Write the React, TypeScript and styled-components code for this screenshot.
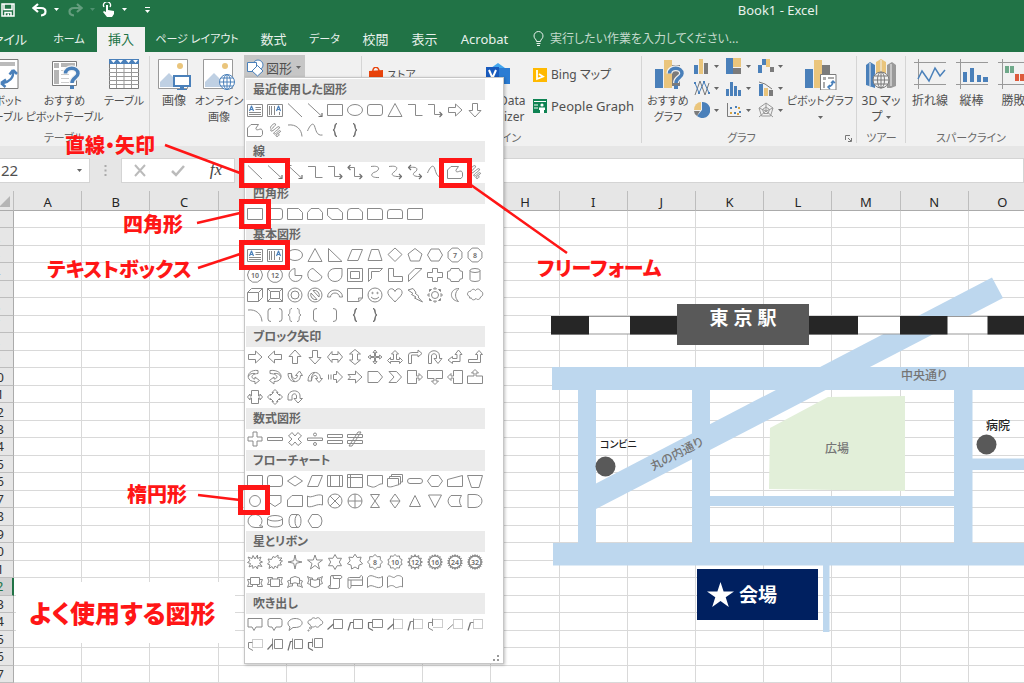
import React from "react";
import styled, { createGlobalStyle, css } from "styled-components";

const GREEN = "#217346";
const RED = "#ff1616";
const BLUE = "#4a80ba";
const SAND = "#eac57c";
const GREY = "#7b7b7b";
const ROAD = "#bdd7ee";

const GlobalStyle = createGlobalStyle`
  *, *::before, *::after { box-sizing: border-box; }
  body {
    margin: 0;
    font-family: "Noto Sans", "Noto Sans CJK JP", sans-serif;
    font-size: 12px;
    line-height: 16px;
    font-feature-settings: "palt";
    color: #505050;
    background: #fff;
  }
  button, input {
    font: inherit;
    font-feature-settings: inherit;
    color: inherit;
    border: 0;
    padding: 0;
    margin: 0;
    background: none;
  }
`;

const Page = styled.div`
  position: relative;
  display: flex;
  flex-direction: column;
  min-height: 100vh;
  overflow: hidden;
`;

/* ---------- title bar and tabs ---------- */

const TitleBar = styled.header`
  display: flex;
  align-items: center;
  justify-content: space-between;
  height: 27px;
  padding: 0 206px 8px 1px;
  background: ${GREEN};
  color: #e8f1ec;
`;

const QuickAccess = styled.div`
  display: flex;
  align-items: center;
  gap: 7px;
  height: 20px;
`;

const QuickButton = styled.button<{ $w: number; $dim?: boolean }>`
  display: flex;
  width: ${(p) => p.$w}px;
  opacity: ${(p) => (p.$dim ? 0.3 : 1)};
`;

const BookTitle = styled.h1`
  margin: 0;
  font-size: 13px;
  font-weight: 400;
  line-height: 20px;
`;

const Tabs = styled.nav`
  display: grid;
  grid-template-columns: 41px 56px 48px 104px 49px 53px 49px 49px 71px 1fr;
  height: 25px;
  background: ${GREEN};
`;

const Tab = styled.button<{ $active?: boolean; $end?: boolean; $long?: boolean }>`
  display: flex;
  align-items: center;
  justify-content: ${(p) => (p.$end ? "flex-end" : "center")};
  padding-right: ${(p) => (p.$end ? 14 : 0)}px;
  padding-bottom: 2px;
  font-size: ${(p) => (p.$long ? 11 : 13)}px;
  white-space: nowrap;
  color: ${(p) => (p.$active ? GREEN : "#e8f1ec")};
  background: ${(p) => (p.$active ? "#f1f1f1" : "transparent")};
`;

const TellMe = styled.label`
  display: flex;
  align-items: center;
  gap: 6px;
  padding: 0 0 2px 13px;
  color: #c4dacd;
`;

const TellMeInput = styled.input`
  width: 220px;
  font-size: 12px;
  &::placeholder { color: #c4dacd; opacity: 1; }
`;

/* ---------- ribbon ---------- */

const Ribbon = styled.section`
  display: flex;
  height: 94px;
  background: #f1f1f1;
  overflow: hidden;
`;

const GroupBox = styled.div<{ $w: number }>`
  position: relative;
  display: flex;
  flex: none;
  flex-direction: column;
  width: ${(p) => p.$w}px;
  &:not(:last-child)::after {
    content: "";
    position: absolute;
    right: 0;
    top: 4px;
    bottom: 3px;
    width: 1px;
    background: #d5d5d5;
  }
`;

const Tools = styled.div<{ $pad?: number; $cut?: number }>`
  display: flex;
  height: 78px;
  padding-left: ${(p) => p.$pad ?? 0}px;
  margin-left: ${(p) => -(p.$cut ?? 0)}px;
`;

const GroupLabel = styled.div<{ $shift?: number }>`
  padding-right: ${(p) => p.$shift ?? 0}px;
  text-align: center;
  font-size: 11px;
  color: #6a6a6a;
`;

const BigButton = styled.button<{ $w: number }>`
  display: flex;
  flex: none;
  flex-direction: column;
  align-items: center;
  width: ${(p) => p.$w}px;
  padding-top: 6px;
  white-space: nowrap;
  svg { display: block; flex: none; }
`;

const BigText = styled.span<{ $small?: boolean }>`
  display: flex;
  flex-direction: column;
  align-items: center;
  margin-top: 3px;
  font-size: ${(p) => (p.$small ? 11 : 12)}px;
`;

const CaretLine = styled.span`
  display: flex;
  align-items: center;
  gap: 3px;
  height: 16px;
`;

const ShapesButton = styled.button`
  display: flex;
  align-items: center;
  gap: 2px;
  height: 25px;
  width: 61px;
  margin: 3px 0 0 2px;
  padding-left: 2px;
  background: #c6c6c6;
`;

const ShapesWord = styled.span`
  margin-right: 2px;
  font-size: 13px;
`;

const LinkColumn = styled.div`
  display: flex;
  flex-direction: column;
  gap: 15px;
  padding: 15px 0 0 2px;
`;

const SmallButton = styled.button<{ $size?: number }>`
  display: flex;
  align-items: center;
  gap: 4px;
  height: 16px;
  font-size: ${(p) => p.$size ?? 13}px;
  white-space: nowrap;
`;

const StoreSlot = styled.div`
  width: 95px;
  padding-top: 15px;
`;

const ChartGrid = styled.div`
  display: grid;
  grid-template-columns: repeat(3, 32px);
  grid-auto-rows: 22px;
  padding: 3px 0 0 3px;
`;

const ChartButton = styled.button`
  display: flex;
  align-items: center;
  gap: 4px;
`;

const Launcher = styled.button`
  position: absolute;
  right: 5px;
  bottom: 4px;
  display: flex;
`;

/* ---------- formula bar ---------- */

const FormulaBar = styled.div`
  display: flex;
  align-items: center;
  height: 45px;
  padding-top: 3px;
  background: #e6e6e6;
`;

const NameBox = styled.div`
  display: flex;
  align-items: center;
  width: 90px;
  height: 25px;
  padding: 0 7px 0 1px;
  background: #fff;
  border: 1px solid #d4d4d4;
  border-left: 0;
`;

const NameInput = styled.input`
  flex: 1;
  min-width: 0;
  font-size: 15px;
`;

const Grip = styled.div`
  width: 31px;
  display: flex;
  justify-content: center;
`;

const FormulaTools = styled.div`
  display: flex;
  align-items: center;
  justify-content: space-between;
  width: 114px;
  height: 25px;
  padding: 0 12px 0 11px;
  margin-right: 5px;
  background: #fff;
  border: 1px solid #d4d4d4;
  button { display: flex; }
`;

const FxButton = styled.button`
  font-family: "Liberation Serif", serif;
  font-size: 17px;
  font-style: italic;
  color: #444;
`;

const FormulaInput = styled.input`
  flex: 1;
  height: 25px;
  background: #fff;
  border: 1px solid #d4d4d4;
`;

/* ---------- worksheet ---------- */

const SheetArea = styled.main`
  position: relative;
  flex: 1;
  display: flex;
  margin: 0 -13px 0 -20px;
`;

const Sheet = styled.table`
  display: grid;
  flex: 1;
  grid-template-columns: 34px repeat(15, 1fr);
  grid-template-rows: 20px repeat(27, minmax(15px, 1fr));
  thead, tbody, tr { display: contents; }
`;

const ColHead = styled.th`
  padding: 0;
  background: #e6e6e6;
  border-right: 1px solid #bdbdbd;
  border-bottom: 1px solid #ababab;
  font-size: 13px;
  font-weight: 400;
  line-height: 22px;
  color: #262626;
`;

const Corner = styled(ColHead)`
  display: flex;
  justify-content: flex-end;
  align-items: flex-end;
  padding: 0 3px 3px 0;
`;

const RowHead = styled.th<{ $active?: boolean }>`
  display: flex;
  align-items: center;
  justify-content: center;
  padding: 0;
  background: #e6e6e6;
  border-right: 1px solid #ababab;
  border-bottom: 1px solid #bdbdbd;
  font-size: 13px;
  font-weight: 400;
  line-height: 14px;
  color: #333;
  ${(p) =>
    p.$active &&
    css`
      background: #d2d2d2;
      border-right: 2px solid ${GREEN};
      color: ${GREEN};
    `}
`;

const Cell = styled.td`
  padding: 0;
  border-right: 1px solid #d9d9d9;
  border-bottom: 1px solid #d9d9d9;
`;

/* ---------- map drawn on the sheet ---------- */

const MapCanvas = styled.div`
  position: absolute;
  left: 551px;
  top: 277px;
  width: 473px;
  height: 356px;
  svg { display: block; }
`;

const MapBox = styled.div<{ $x: number; $y: number; $w: number; $h: number; $c: string }>`
  position: absolute;
  left: ${(p) => p.$x}px;
  top: ${(p) => p.$y}px;
  display: flex;
  align-items: center;
  justify-content: center;
  gap: 5px;
  width: ${(p) => p.$w}px;
  height: ${(p) => p.$h}px;
  background: ${(p) => p.$c};
  color: #fff;
  font-size: 19px;
  font-weight: 700;
  line-height: 24px;
`;

const Station = styled(MapBox)`
  align-items: flex-start;
  padding-top: 2px;
`;

const Venue = styled(MapBox)`
  justify-content: flex-start;
  padding-left: 10px;
`;

const Place = styled.span<{ $x: number; $y: number; $c?: string; $turn?: number; $size?: number }>`
  position: absolute;
  left: ${(p) => p.$x}px;
  top: ${(p) => p.$y}px;
  font-size: ${(p) => p.$size ?? 12}px;
  font-weight: 500;
  white-space: nowrap;
  color: ${(p) => p.$c ?? "#757575"};
  transform: rotate(${(p) => p.$turn ?? 0}deg);
`;

/* ---------- shapes menu ---------- */

const Menu = styled.div`
  position: absolute;
  left: 244px;
  top: 77px;
  width: 260px;
  height: 587px;
  padding: 1px;
  background: #fff;
  border: 1px solid #c6c6c6;
  box-shadow: 1px 1px 3px rgba(0, 0, 0, 0.25);
`;

const MenuList = styled.div`
  display: flex;
  flex-direction: column;
  justify-content: space-between;
  width: 239px;
  height: 575px;
`;

const MenuTitle = styled.h2`
  margin: 0;
  height: 21px;
  padding-left: 7px;
  background: #ebebeb;
  font-size: 12px;
  font-weight: 700;
  line-height: 21px;
  color: #666;
`;

const ShapeGrid = styled.div`
  display: grid;
  grid-template-columns: repeat(12, 20px);
  grid-auto-rows: 20px;
  margin-left: -1px;
`;

const ShapeButton = styled.button`
  display: block;
  width: 20px;
  height: 20px;
  svg { display: block; }
`;

const ResizeGrip = styled.div`
  position: absolute;
  right: 3px;
  bottom: 1px;
  display: flex;
`;

/* ---------- red notes ---------- */

const Note = styled.strong<{ $x: number; $y: number }>`
  position: absolute;
  left: ${(p) => p.$x}px;
  top: ${(p) => p.$y}px;
  font-size: 20px;
  font-weight: 900;
  line-height: 24px;
  white-space: nowrap;
  color: ${RED};
`;

const Frame = styled.div<{ $x: number; $y: number; $w: number }>`
  position: absolute;
  left: ${(p) => p.$x}px;
  top: ${(p) => p.$y}px;
  width: ${(p) => p.$w}px;
  height: 30px;
  border: 5px solid ${RED};
`;

const Pointers = styled.svg`
  position: absolute;
  left: 0;
  top: 0;
  pointer-events: none;
`;

const Caption = styled.div`
  position: absolute;
  left: 16px;
  top: 582px;
  width: 219px;
  height: 61px;
  padding-left: 13px;
  background: #fff;
  color: ${RED};
  font-size: 25px;
  font-weight: 900;
  line-height: 62px;
  white-space: nowrap;
`;

/* ---------- shape glyphs, drawn in a 20 x 20 box ---------- */

const ell = (cx: number, cy: number, rx: number, ry = rx) =>
  `M${cx - rx} ${cy}a${rx} ${ry} 0 1 0 ${2 * rx} 0a${rx} ${ry} 0 1 0 ${-2 * rx} 0Z`;

const ring = (n: number, radii: number[], turn = -90) => {
  const pts = Array.from({ length: n }, (_, i) => {
    const a = ((turn + (360 * i) / n) * Math.PI) / 180;
    const r = radii[i % radii.length];
    return `${(10 + r * Math.cos(a)).toFixed(2)} ${(10 + r * Math.sin(a)).toFixed(2)}`;
  });
  return `M${pts.join("L")}Z`;
};

const star = (n: number, outer: number, inner: number) => ring(2 * n, [outer, inner]);

const SCRIBBLE = "M5.500 8.500C5 6 9.500 2.500 10.500 4C11.500 6 4 9.500 6 11C8 12 13 5 14.500 7C15.500 9 7 12.500 9 14C10.500 15 14.500 9 15.500 11C16 13 10 14 11 16C12 17 14.500 16 14 14";
const FREEFORM = "M2.500 16.500V8L6 4.500H13.500L11 8C10.500 10.500 13 10 15 9C17 9 17.500 10 17.500 12V14.500L16 16.500Z";

type Glyph = { d: string; dash?: string; heavy?: string; text?: string; blue?: string };

const G: Record<string, Glyph> = {
  textH: { d: "M2.500 4.500H17.500V16.500H2.500ZM10.500 7.500H16M10.500 9.500H16M4 12.500H16M4 14.500H16", blue: "M4.500 11L6.500 6L8.500 11M5 9.500H8" },
  textV: { d: "M2.500 4.500H17.500V16.500H2.500ZM4.500 6V15M6.500 6V15M9.500 6V15M14.500 12V15", blue: "M11.500 11L13.500 6L15.500 11M12 9.500H15" },
  line: { d: "M3 3.500L17 17" },
  arrow: { d: "M3 3.500L17 16.500", heavy: "M17 13V16.500H13.500" },
  arrow2: { d: "M3 3.500L17 16.500M3 7V3.500H6.500", heavy: "M17 13V16.500H13.500" },
  rect: { d: "M2.500 4.500H17.500V15.500H2.500Z" },
  ellipse: { d: ell(10, 10, 7.5, 5.5) },
  roundRect: { d: "M5 4.500H15A2.500 2.500 0 0 1 17.500 7V13A2.500 2.500 0 0 1 15 15.500H5A2.500 2.500 0 0 1 2.500 13V7A2.500 2.500 0 0 1 5 4.500Z" },
  triangle: { d: "M10 3.500L17 16.500H3Z" },
  elbow: { d: "M3 4.500H10.500V15.500H17.500" },
  elbowArrow: { d: "M3 4.500H9.500V14.500H17", heavy: "M14.500 12L17 14.500L14.500 17" },
  elbowDouble: { d: "M3 5.500H9.500V14.500H17", heavy: "M14.500 12L17 14.500L14.500 17M5.500 3L3 5.500L5.500 8" },
  curveConn: { d: "M6 4.500C17 3 14 9 10 10S4 16 14 15.500" },
  curveArrow: { d: "M4 4.500C15 3 12 8 9 10S6 15 16 14.500", heavy: "M14 12L16.500 14.500L14 17" },
  curveDouble: { d: "M4 5.500C15 4 12 9 10 10S6 15 16 14.500", heavy: "M14 12L16.500 14.500L14 17M6 3L3.500 5.500L6 8" },
  curve: { d: "M2.500 11C5 5 8 2 9.500 6S11.500 16 17.500 15" },
  freeform: { d: FREEFORM },
  scribble: { d: SCRIBBLE },
  arc: { d: "M3 5C11 4 16.500 9 17 16.500" },
  braceL: { d: "M12 3.500C8.500 3.500 11 9 8 10C11 11 8.500 16.500 12 16.500", heavy: "M12 3.500C9 3.500 11 9 8.500 10C11 11 9 16.500 12 16.500" },
  braceR: { d: "M8 3.500C11.500 3.500 9 9 12 10C9 11 11.500 16.500 8 16.500", heavy: "M8 3.500C11 3.500 9 9 11.500 10C9 11 11 16.500 8 16.500" },

  snip1: { d: "M2.500 4.500H13.500L17.500 8.500V15.500H2.500Z" },
  snip2: { d: "M6 4.500H14L17.500 8.500V15.500H2.500V8.500Z" },
  snipDiag: { d: "M2.500 4.500H13L17.500 8.500V15.500H7L2.500 11.500Z" },
  snipRound: { d: "M6 4.500H14L17.500 8V15.500H2.500V8Q2.500 4.500 6 4.500Z" },
  round1: { d: "M2.500 4.500H15Q17.500 4.500 17.500 7V15.500H2.500Z" },
  round2: { d: "M5 5.500H15Q17.500 5.500 17.500 8V14.500H2.500V8Q2.500 5.500 5 5.500Z" },
  roundDiag: { d: "M4 4.500H17.500V14Q17.500 15.500 16 15.500H2.500V6Q2.500 4.500 4 4.500Z" },

  rtTriangle: { d: "M3.500 3.500L17 16.500H3.500Z" },
  parallelogram: { d: "M7 4.500H17.500L13 15.500H2.500Z" },
  trapezoid: { d: "M6.500 4.500H13.500L17 15.500H3Z" },
  diamond: { d: "M10 3L17 9.500L10 16.500L3 9.500Z" },
  pentagon: { d: "M10 3.500L17 9L14.500 16H5.500L3 9Z" },
  hexagon: { d: "M6 4L14 4L17.500 10L14 16H6L2.500 10Z" },
  heptagon: { d: ring(8, [7.5], -67.5), text: "7" },
  octagon: { d: ring(8, [7.5], -67.5), text: "8" },
  decagon: { d: ring(10, [7.5], 0), text: "10" },
  dodecagon: { d: ring(12, [7.5], -75), text: "12" },
  pie: { d: "M10 3.500A6.500 6.500 0 1 0 17 10.500H10Z" },
  chord: { d: "M8 3.500L17 11.500C16 17 7 18 4 13.500C1 9 4 4 8 3.500Z" },
  teardrop: { d: "M17 3.500V10A7 6.500 0 1 1 10 3.500Z" },
  frame: { d: "M2.500 3.500H17.500V16.500H2.500ZM5.500 6.500H14.500V13.500H5.500Z" },
  halfFrame: { d: "M3.500 3.500H17.500L14.500 6.500H6.500V13.500L3.500 16.500Z" },
  ell: { d: "M3.500 3.500H8.500V11.500H17.500V16.500H3.500Z" },
  stripe: { d: "M10 3.500H17L3.500 16.500V10Z" },
  cross: { d: "M7.500 3.500H12.500V7.500H17.500V12.500H12.500V16.500H7.500V12.500H2.500V7.500H7.500Z" },
  plaque: { d: "M6 3.500H14Q14 6.500 17.500 6.500V13.500Q14 13.500 14 16.500H6Q6 13.500 2.500 13.500V6.500Q6 6.500 6 3.500Z" },
  can: { d: "M5 5.500A5 2 0 0 1 15 5.500V14.500A5 2 0 0 1 5 14.500ZM5 5.500A5 2 0 0 0 15 5.500" },
  cube: { d: "M2.500 7.500L6.500 3.500H17.500V12.500L13.500 16.500H2.500ZM2.500 7.500H13.500V16.500M13.500 7.500L17.500 3.500" },
  bevel: { d: "M2.500 3.500H17.500V16.500H2.500ZM5.500 6.500H14.500V13.500H5.500ZM2.500 3.500L5.500 6.500M17.500 3.500L14.500 6.500M2.500 16.500L5.500 13.500M17.500 16.500L14.500 13.500" },
  donut: { d: ell(10, 10, 7) + ell(10, 10, 4) },
  no: { d: ell(10, 10, 7) + "M6 8L12 14.500A5 5 0 0 1 6 8ZM8 5.500A5 5 0 0 1 14 12Z" },
  blockArc: { d: "M2.500 12A7.500 7 0 0 1 17.500 12H14.500A4.500 4 0 0 0 5.500 12Z" },
  folded: { d: "M2.500 3.500H17.500V13L14 16.500H2.500ZM17.500 13L13.500 13L14 16.500" },
  smiley: { d: ell(10, 10, 7) + ell(7.5, 8, 0.7) + ell(12.5, 8, 0.7) + "M6 12Q10 16 14 12" },
  heart: { d: "M10 6.500C12 1.500 18 4 17 8.500C16 12 12 14 10 17C8 14 4 12 3 8.500C2 4 8 1.500 10 6.500Z" },
  bolt: { d: "M3 5L8 3.500L11 7.500L10 8L14 11.500L13 12L17.500 17L9.500 13L11 12L6.500 9.500L8 8.500Z" },
  sun: { d: ell(10, 10, 3.5) + "M8.500 4L10 2.500L11.500 4ZM8.500 16L10 17.500L11.500 16ZM4 8.500L2.500 10L4 11.500ZM16 8.500L17.500 10L16 11.500ZM4.500 4.500H6.500L4.500 6.500ZM15.500 4.500V6.500L13.500 4.500ZM4.500 15.500V13.500L6.500 15.500ZM15.500 15.500H13.500L15.500 13.500Z" },
  moon: { d: "M14 3.500C4.500 3.500 3.500 15 13.500 16.500C9.500 13 9.500 7 14 3.500Z" },
  cloud: { d: "M4.500 11.500C1 10 2.500 6 5.500 6.500C7 3.500 9.500 4 10.500 5.500C12 3 15 4 15.500 6C19 7 18 11.500 15.500 12C15 15 12 15 11 13.500C8.500 16 6.500 14.500 6.500 13Q4 14 4.500 11.500Z" },
  bracketPair: { d: "M6 3.500Q3 3.500 3 6V14Q3 16.500 6 16.500M14 3.500Q17 3.500 17 6V14Q17 16.500 14 16.500" },
  bracePair: { d: "M7 3.500C3 3.500 6.500 9 3 10C6.500 11 3 16.500 7 16.500M12 3.500C16 3.500 12.500 9 16 10C12.500 11 16 16.500 12 16.500" },
  bracketL: { d: "M12 3.500Q8.500 3.500 8.500 6V14Q8.500 16.500 12 16.500" },
  bracketR: { d: "M8 3.500Q11.500 3.500 11.500 6V14Q11.500 16.500 8 16.500" },

  right: { d: "M3.500 7.500H10.500V4L17 10L10.500 16V12.500H3.500Z" },
  left: { d: "M16.500 7.500H9.500V4L3 10L9.500 16V12.500H16.500Z" },
  up: { d: "M7.500 16.500V9.500H4L10 3L16 9.500H12.500V16.500Z" },
  down: { d: "M7.500 3.500V10.500H4L10 17L16 10.500H12.500V3.500Z" },
  leftRight: { d: "M2.500 10L7 4.500V7.500H13V4.500L17.500 10L13 15.500V12.500H7V15.500Z" },
  upDown: { d: "M10 2.500L15.500 7H12.500V13H15.500L10 17.500L4.500 13H7.500V7H4.500Z" },
  quad: { d: "M10 3L12 5.500H10.500V9.500H14.500V8L17 10L14.500 12V10.500H10.500V14.500H12L10 17L8 14.500H9.500V10.500H5.500V12L3 10L5.500 8V9.500H9.500V5.500H8Z" },
  tri: { d: "M10 3.500L13.500 7H11.500V12.500H14.500V10.500L17.500 13.500L14.500 16.500V14.500H5.500V16.500L2.500 13.500L5.500 10.500V12.500H8.500V7H6.500Z" },
  bent: { d: "M3.500 16.500V8Q3.500 5.500 7 5.500H13V3L17 6.500L13 10V8H6.500V16.500Z" },
  uturn: { d: "M3.500 16.500V9C3.500 2 14.500 2 14.500 9V11.500H17L13 16.500L9 11.500H11.500V9C11.500 6 6.500 6 6.500 9V16.500Z" },
  leftUp: { d: "M13.500 3L17 7.500H15V14.500H7.500V16.500L3 13L7.500 9.500V11.500H12V7.500H10Z" },
  bentUp: { d: "M14 3.500L17.500 7.500H15.500V15.500H3.500V12.500H12.500V7.500H10.500Z" },
  cRight: { d: "M13 3.500C1 2 0 15 10 14.500V17L14.500 13.500L10 10V12C6 12 5 7 13 6.500ZM3.500 9.500C4 7 7 6 10 6.500" },
  cLeft: { d: "M5 3.500C19 2 19 15 9 14.500V17L4.500 13.500L9 10V12C13 12 14 7 5 6.500ZM15.500 9.500C15 7 12 6 9 6.500" },
  cUp: { d: "M3 6.500C3 17 15.500 17 15.500 8.500H17.500L14.500 4L10.500 8.500H12.500C12 13 7 13 6.500 6.500ZM10 14.500C7 13 6 10 6.500 6.500" },
  cDown: { d: "M3 14C3 3 15.500 3 15.500 11.500H17.500L14 15.500L10.500 11.500H12.500C12 7 7 7 6.500 14ZM10 5.500C7 7 6 10 6.500 14" },
  striped: { d: "M8.500 7.500H11.500V4L17.500 10L11.500 16V12.500H8.500ZM3.500 7.500V12.500M6 7.500V12.500" },
  notched: { d: "M3 7.500H10.500V4L17 10L10.500 16V12.500H3L5.500 10Z" },
  home: { d: "M3 4.500H13L17.500 10L13 15.500H3Z" },
  chevron: { d: "M4 4.500H11.500L16.500 10L11.500 15.500H4L9 10Z" },
  callR: { d: "M2.500 3.500H11.500V9H14V6.500L17.500 10L14 13.500V11H11.500V16.500H2.500Z" },
  callD: { d: "M2.500 3.500H17.500V11.500H11V14H13.500L10 17.500L6.500 14H9V11.500H2.500Z" },
  callL: { d: "M17.500 3.500H8.500V9H6V6.500L2.500 10L6 13.500V11H8.500V16.500H17.500Z" },
  callU: { d: "M2.500 16.500H17.500V9H11V6H13.500L10 2.500L6.500 6H9V9H2.500Z" },
  callLR: { d: "M6.500 3.500H13.500V9H15V7L17.500 10L15 13V11H13.500V16.500H6.500V11H5V13L2.500 10L5 7V9H6.500Z" },
  callQ: { d: "M10 2.500L13 5.500H11.500L14.500 8.500V7L17.500 10L14.500 13V11.500L11.500 14.500H13L10 17.500L7 14.500H8.500L5.500 11.500V13L2.500 10L5.500 7V8.500L8.500 5.500H7Z" },
  circular: { d: "M3 13V10C3 2 15 2 15 9V11.500H17.500L13 16L9 11.500H11.500V9C11.500 6 7 6 7 9.500V13Z" },

  plus: { d: "M8 3H12V8H17V12H12V17H8V12H3V8H8Z" },
  minus: { d: "M2.500 8.500H17.500V11.500H2.500Z" },
  mult: { d: "M7 3.500L10 7L13 3.500L16.500 7L13 10L16.500 13.500L13 16.500L10 13L7 16.500L3.500 13.500L7 10L3.500 7Z" },
  div: { d: "M2.500 9H17.500V11.500H2.500Z" + ell(10, 5.5, 1.5) + ell(10, 15, 1.5) },
  eq: { d: "M2.500 5.500H17.500V8.500H2.500ZM2.500 11.500H17.500V14.500H2.500Z" },
  neq: { d: "M2.500 5.500H17.500V8.500H2.500ZM2.500 11.500H17.500V14.500H2.500ZM13 3H16L7 17H4Z" },

  decision: { d: "M10 5L17.500 10L10 15L2.500 10Z" },
  predefined: { d: "M2.500 4.500H17.500V15.500H2.500ZM5.500 4.500V15.500M14.500 4.500V15.500" },
  internal: { d: "M2.500 3.500H17.500V16.500H2.500ZM5.500 3.500V16.500M2.500 6.500H17.500" },
  document: { d: "M2.500 4.500H17.500V13C14 12 11 17 7 16L2.500 14.500Z" },
  multidoc: { d: "M2.500 7.500H13.500V14C10 14 7 17 2.500 15.500ZM4.500 7V5.500H15.500V13H14M6.500 5V3.500H17.500V11H16" },
  terminator: { d: "M5 7.500H15A2.500 2.500 0 0 1 15 12.500H5A2.500 2.500 0 0 1 5 7.500Z" },
  preparation: { d: "M6.500 4.500H13.500L17.500 10L13.500 15.500H6.500L2.500 10Z" },
  manualIn: { d: "M2.500 8.500L17.500 4.500V15.500H2.500Z" },
  manualOp: { d: "M2.500 4.500H17.500L14 16.500H6.500Z" },
  connector: { d: ell(10, 10, 5.5) },
  offpage: { d: "M4 4.500H16V11.500L10 15.500L4 11.500Z" },
  card: { d: "M7 4.500H17.500V15.500H2.500V9Z" },
  tape: { d: "M2.500 5C6 8 12 2 17.500 4.500V14C12 12 8 17 2.500 15.500Z" },
  sum: { d: ell(10, 10, 7) + "M5 5L15 15M15 5L5 15" },
  or: { d: ell(10, 10, 7) + "M10 3V17M3 10H17" },
  collate: { d: "M5.500 3.500H14.500L5.500 16.500H14.500Z" },
  sort: { d: "M10 3L15 10L10 17L5 10ZM5 10H15" },
  extract: { d: "M10 4.500L15.500 15.500H4.500Z" },
  merge: { d: "M3.500 4L16.500 4L10 16.500Z" },
  stored: { d: "M6 4.500H16.500Q12.500 10 16.500 15.500H6Q0 10 6 4.500Z" },
  delay: { d: "M3 3.500H10A7 6.500 0 0 1 10 16.500H3Z" },
  seq: { d: "M17.500 16.500H10A7 6.500 0 1 1 14.500 15H17.500Z" },
  disk: { d: "M2.500 7.500A7.500 3 0 0 1 17.500 7.500V13A7.500 3 0 0 1 2.500 13ZM2.500 7.500A7.500 2.500 0 0 0 17.500 7.500" },
  direct: { d: "M7 3.500H13A3 6.500 0 0 1 13 16.500H7A3 6.500 0 0 1 7 3.500ZM13 3.500A3 6.500 0 0 0 13 16.500" },
  display: { d: "M3 10L7 3.500H13Q17 5 17 10T13 16.500H7Z" },

  boom1: { d: "M10 7L12.500 3L12.500 6.500L16 5L14.500 8.500L17.500 10L14.500 11L17 14.500L13 13.500L12.500 17L10.500 14L8 16.500L7.500 13.500L4 15L5.500 11.500L2.500 10.500L5 8.500L3 5L7 6.500L8 3.500Z" },
  boom2: { d: "M10 5.500L13 3L13 6L17 6L14.500 8.500L17.500 9L15 11L16.500 13L13 13L12.500 16L10 14L8.500 17L7 14.500L4 16.500L5 13L2.500 12L4.500 10L3 7L6.500 7.500L8 4.500Z" },
  star4: { d: star(4, 7, 1.8) },
  star5: { d: "M10 3L11.700 8H17.500L13 11.500L14.500 17L10 13.500L5.500 17L7 11.500L2.500 8H8.300Z" },
  star6: { d: star(6, 7.5, 4.3) },
  star7: { d: star(7, 7.8, 5) },
  star8: { d: star(8, 7.5, 5.8), text: "8" },
  star10: { d: star(10, 7.5, 6), text: "10" },
  star12: { d: star(12, 7.5, 5.2) + ell(10, 10, 5.8), text: "12" },
  star16: { d: star(16, 7.5, 5.4) + ell(10, 10, 6), text: "16" },
  star24: { d: star(18, 7.5, 5.4) + ell(10, 10, 6), text: "24" },
  star32: { d: star(20, 7.5, 5.4) + ell(10, 10, 6), text: "32" },
  ribbonUp: { d: "M5.500 12.500V5.500H14.500V12.500ZM5.500 7.500H2.500L4 11L2.500 14.500H7.500V12.500M14.500 7.500H17.500L16 11L17.500 14.500H12.500V12.500" },
  ribbonDown: { d: "M5.500 7V14.500H14.500V7ZM5.500 12.500H2.500L4 9L2.500 5.500H7.500V7M14.500 12.500H17.500L16 9L17.500 5.500H12.500V7" },
  cRibbonUp: { d: "M5.500 12V6Q10 3 14.500 6V12Q10 9.500 5.500 12ZM5.500 8L2.500 9L4 12L2.500 15.500Q5 13.500 7.500 14V11.500M14.500 8L17.500 9L16 12L17.500 15.500Q15 13.500 12.500 14V11.500" },
  cRibbonDown: { d: "M5.500 7V14Q10 17 14.500 14V7Q10 9.500 5.500 7ZM5.500 12.500L2.500 11.500L4 8L2.500 4.500Q5 6.500 7.500 6V8M14.500 12.500L17.500 11.500L16 8L17.500 4.500Q15 6.500 12.500 6V8" },
  vScroll: { d: "M6.500 3.500H16Q18 5 16 6.500H14.500V15Q14.500 16.500 12.500 16.500H4Q2 15 4 13.500H5.500V5Q5.500 3.500 7 3.500Q9 4 8.500 6.500H14.500M4 13.500Q6.500 14 4.500 16.500" },
  hScroll: { d: "M3 6.500Q3 5.500 4.500 5.500H15V4.500Q16.500 2.500 17.500 4.500V13.500H6V15.500Q4.500 17.500 3 15.500ZM6 13.500V8H3M6 8H17.500" },
  wave: { d: "M2.500 5.500C7 0 12 9 17.500 4.500V14C12 19 7 10 2.500 15.500Z" },
  dWave: { d: "M2.500 5C5 2 8 7 10 5S15 3 17.500 5.500V15C15 13 12 17 10 15S5 13 2.500 15.500Z" },

  rectCall: { d: "M3 4.500H17V13H11L9 16.500L7 13H3Z" },
  roundCall: { d: "M5 4.500H15Q17 4.500 17 6.500V11Q17 13 15 13H11L9 16.500L7 13H5Q3 13 3 11V6.500Q3 4.500 5 4.500Z" },
  ellCall: { d: "M5 13C0 9 5 4.500 10 4.500C19.500 4.500 19.500 13.500 10 13.500H8L4 16.500Z" },
  cloudCall: { d: "M5 10.500C1.500 10 3 5 6 6C7 3 10 3.500 10.500 5C12.500 2.500 15 4 15.500 6C19 7 18 11 15 11C14 14 11 13.500 10.500 12C8 14 6 13 5 10.500Z" + ell(5.5, 14, 1) + ell(3.5, 16.5, 0.6) },
  lc1: { d: "M8.500 5.500H17.500V14.500H8.500Z", heavy: "M8.500 10L2.500 15.500" },
  lc2: { d: "M8.500 5.500H17.500V14.500H8.500Z", heavy: "M8.500 8.500H5.500L3 16.500" },
  lc3: { d: "M7.500 5.500H17.500V13.500H7.500Z", heavy: "M7.500 8.500H3.500V14L8 16.500" },
  ac1: { d: "M8.500 4.500V15.500", heavy: "M8.500 10L2.500 15.500", dash: "M8.500 5.500H17.500V14.500H8.500" },
  ac2: { d: "M8.500 4.500V15.500M8.500 7.500H5.500", heavy: "M5.500 7.500L3 16.500", dash: "M8.500 5.500H17.500V14.500H8.500" },
  ac3: { d: "M7.500 4.500V12M7.500 8.500H3.500V14L8 16.500", dash: "M7.500 5.500H17.500V13.500H7.500" },
  nb1: { d: "M8 10.500L2.500 15.500", dash: "M8.500 5.500H17.500V14.500H8.500Z" },
  nb2: { d: "M8.500 8.500H5.500", heavy: "M5.500 8.500L3 16.500", dash: "M8.500 5.500H17.500V14.500H8.500Z" },
  nb3: { d: "M7.500 8.500H3.500V14L8 16.500", dash: "M7.500 5.500H17.500V13.500H7.500Z" },
  ab1: { d: "M9.500 5.500H17.500V14.500H9.500ZM7.500 4.500V15.500", heavy: "M7.500 10L2.500 15.500" },
  ab2: { d: "M9.500 5.500H17.500V14.500H9.500ZM7.500 4.500V15.500", heavy: "M7.500 7.500H5.500L3 16.500" },
  ab3: { d: "M9.500 4.500H17.500V13.500H9.500ZM7.500 4.500V13", heavy: "M7.500 8.500H3.500V14L8 16.500" },
};

const MENU: { title: string; shapes: string }[] = [
  { title: "最近使用した図形", shapes: "textH textV line arrow rect ellipse roundRect triangle elbow elbowArrow right down freeform scribble arc curve braceL braceR" },
  { title: "線", shapes: "line arrow arrow2 elbow elbowArrow elbowDouble curveConn curveArrow curveDouble curve freeform scribble" },
  { title: "四角形", shapes: "rect roundRect snip1 snip2 snipDiag snipRound round1 round2 roundDiag" },
  { title: "基本図形", shapes: "textH textV ellipse triangle rtTriangle parallelogram trapezoid diamond pentagon hexagon heptagon octagon decagon dodecagon pie chord teardrop frame halfFrame ell stripe cross plaque can cube bevel donut no blockArc folded smiley heart bolt sun moon cloud arc bracketPair bracePair bracketL bracketR braceL braceR" },
  { title: "ブロック矢印", shapes: "right left up down leftRight upDown quad tri bent uturn leftUp bentUp cRight cLeft cUp cDown striped notched home chevron callR callD callL callU callLR callQ circular" },
  { title: "数式図形", shapes: "plus minus mult div eq neq" },
  { title: "フローチャート", shapes: "rect roundRect decision parallelogram predefined internal document multidoc terminator preparation manualIn manualOp connector offpage card tape sum or collate sort extract merge stored delay seq disk direct display" },
  { title: "星とリボン", shapes: "boom1 boom2 star4 star5 star6 star7 star8 star10 star12 star16 star24 star32 ribbonUp ribbonDown cRibbonUp cRibbonDown vScroll hScroll wave dWave" },
  { title: "吹き出し", shapes: "rectCall roundCall ellCall cloudCall lc1 lc2 lc3 ac1 ac2 ac3 nb1 nb2 nb3 ab1 ab2 ab3" },
];

const ShapeIcon = ({ name }: { name: string }) => {
  const g = G[name];
  return (
    <svg width="20" height="20" viewBox="0 0 20 20" fill="none" stroke="#8a8a8a" strokeLinejoin="round">
      <path d={g.d} />
      {g.dash && <path d={g.dash} strokeDasharray="1 1" stroke="#999" />}
      {g.heavy && <path d={g.heavy} stroke="#707070" strokeWidth="1.2" />}
      {g.blue && <path d={g.blue} stroke={BLUE} strokeWidth="1.200" />}
      {g.text && (
        <text x="10" y="12.500" textAnchor="middle" fontSize="7" fontWeight="600" fill="#6a6a6a" stroke="none">
          {g.text}
        </text>
      )}
    </svg>
  );
};

/* ---------- ribbon icons ---------- */

const Caret = ({ color = "#666" }: { color?: string }) => (
  <svg width="5" height="3" viewBox="0 0 5 3">
    <path d="M0 0H5L2.500 3Z" fill={color} />
  </svg>
);

const Svg = ({ w = 32, h = 32, children }: { w?: number; h?: number; children: React.ReactNode }) => (
  <svg width={w} height={h} viewBox={`0 0 ${w} ${h}`} fill="none">
    {children}
  </svg>
);

const PivotIcon = () => (
  <Svg>
    <path d="M1.500 1.500H31V30.500H1.500Z" fill="#fff" stroke={GREY} />
    <path d="M12 4H28V8H12Z" fill="#bbb" />
    <path d="M26 13C27 20 22 24 16 25M26 12L22.500 16.500M26 12L30 16M14 25L19 21.500M14 25L18.500 29" stroke={BLUE} strokeWidth="2.500" />
  </Svg>
);

const QuestionMark = ({ x = 0, y = 0 }) => (
  <g transform={`translate(${x} ${y})`}>
    <path d="M1.500 6.500C1.500 -0.500 14 -0.500 14 6.500C14 11 8 10.500 8 16" stroke="#f1f1f1" strokeWidth="6" />
    <path d="M1.500 6.500C1.500 -0.500 14 -0.500 14 6.500C14 11 8 10.500 8 16" stroke={BLUE} strokeWidth="3.500" />
    <path d="M6 18.500H10V22H6Z" fill={BLUE} />
  </g>
);

const SuggestPivotIcon = () => (
  <Svg>
    <path d="M3.500 3.500H27.500V27.500H3.500Z" fill="#fff" stroke={GREY} />
    <path d="M5 5H10V10H5ZM12 5H26V9H12ZM5 12H10V26H5Z" fill="#b5b5b5" />
    <path d="M12 12.500H22M12 16.500H20M12 20.500H20M12 24.500H20" stroke="#ccc" />
    <QuestionMark x={15} y={9} />
  </Svg>
);

const TableIcon = () => (
  <Svg>
    <path d="M1.500 1.500H30.500V30.500H1.500Z" fill="#fff" stroke={GREY} />
    <path d="M1 1H31V6H1Z" fill={BLUE} />
    <path d="M1 10.500H31M1 14.500H31M1 18.500H31M1 22.500H31M1 26.500H31M8.500 6V30M16 6V30M23.500 6V30" stroke="#999" />
    <path d="M3 2H8L5.500 5ZM10 2H15L12.500 5ZM18 2H23L20.500 5ZM25 2H30L27.500 5Z" fill="#fff" />
  </Svg>
);

const PhotoBase = () => (
  <>
    <path d="M1.500 1.500H30.500V30.500H1.500Z" fill="#fff" stroke="#999" />
    <circle cx="23" cy="8" r="3" fill={SAND} />
    <path d="M3 29V24L12 15L24 27V29Z" fill="#bfd0e3" />
  </>
);

const PictureIcon = () => (
  <Svg w={34} h={32}>
    <PhotoBase />
    <path d="M17 18H33V28H17Z" fill="#fff" stroke={BLUE} strokeWidth="2" />
    <path d="M23 28H27V31H30V32H20V31H23Z" fill={BLUE} />
  </Svg>
);

const OnlinePictureIcon = () => (
  <Svg w={34} h={32}>
    <PhotoBase />
    <circle cx="25" cy="24" r="7.500" fill="#fff" stroke={BLUE} />
    <path d="M17.500 24H32.500M25 16.500V31.500M19 20H31M19 28H31" stroke={BLUE} />
    <ellipse cx="25" cy="24" rx="3.500" ry="7.500" stroke={BLUE} />
  </Svg>
);

const ShapesIcon = () => (
  <Svg w={18} h={18}>
    <circle cx="12" cy="6" r="5" fill="#fff" stroke={BLUE} />
    <path d="M1.500 3.500H10.500V12.500H1.500Z" fill="#fff" stroke={BLUE} />
    <path d="M11.500 6.500L17 12L11.500 17L6 12Z" fill="#fff" stroke={BLUE} />
  </Svg>
);

const StoreIcon = () => (
  <Svg w={14} h={16}>
    <path d="M0 4L14 3V16H0Z" fill="#e8430c" />
    <path d="M4 5C3 -1 10 -1 10 4" stroke="#e8430c" strokeWidth="1.500" />
  </Svg>
);

const VisioIcon = () => (
  <Svg w={26} h={32}>
    <path d="M13 5L20 10L13 16L6 10Z" fill="#41a5ee" />
    <path d="M13 10H25V26H13Z" fill="#2b7cd3" />
    <path d="M1 9H14V23H1Z" fill="#185abd" />
    <path d="M4 12L7.500 20L11 12" stroke="#fff" strokeWidth="2" />
  </Svg>
);

const BingIcon = () => (
  <Svg w={14} h={14}>
    <path d="M0 0H14V14H0Z" fill="#ffb900" />
    <path d="M4 2V11L10 8.500L6 6" stroke="#fff" strokeWidth="1.800" />
  </Svg>
);

const PeopleIcon = () => (
  <Svg w={14} h={14}>
    <path d="M0 0H14V14H0Z" fill="#0f8353" />
    <path d="M1 2.500H13M1 6H5M1 9H5" stroke="#fff" />
    <circle cx="9" cy="6" r="1.600" fill="#fff" />
    <path d="M6 8.500H12V11H11V14H7V11H6Z" fill="#fff" />
  </Svg>
);

const SuggestChartIcon = () => (
  <Svg>
    <path d="M3 11H11V30H3Z" fill={BLUE} />
    <path d="M12 2H20V30H12Z" fill={SAND} />
    <path d="M20 7H28V28H20Z" fill={GREY} />
    <QuestionMark x={16} y={9} />
  </Svg>
);

const PivotChartIcon = () => (
  <Svg w={34} h={32}>
    <path d="M2 11H10V30H2Z" fill={BLUE} />
    <path d="M11 2H19V30H11Z" fill={SAND} />
    <path d="M19 7H27V16H19Z" fill={GREY} />
    <path d="M17.500 16.500H33V32H17.500Z" fill="#fff" stroke={GREY} />
    <path d="M20 19H23V22H20ZM25 19H31V21H25ZM20 24H22V30H20Z" fill="#aaa" />
    <path d="M30 23Q30 28 25 29M28 25L30 23L32 25M27 27L25 29L27 31" stroke={BLUE} strokeWidth="1.500" />
  </Svg>
);

const Map3DIcon = () => (
  <Svg w={32} h={32}>
    <path d="M1 7L5 4L10 7V30L1 27Z" fill={BLUE} />
    <path d="M11 4L16 1L21 4V16H11Z" fill={SAND} />
    <path d="M22 7L27 4L31 7V28L26 30H22Z" fill="#9a9a9a" />
    <path d="M5 5V28M26 6V28M16 2V14" stroke="#f1f1f1" />
    <circle cx="16" cy="22" r="8" fill="#f1f1f1" stroke={GREY} />
    <ellipse cx="16" cy="22" rx="3.500" ry="8" stroke={GREY} />
    <path d="M16 14V30M8 22H24M9.500 18H22.500M9.500 26H22.500" stroke={GREY} />
  </Svg>
);

const Axes = () => <path d="M0 4.500H32M0 26.500H32M4.500 1V31" stroke="#999" />;

const SparkLineIcon = () => (
  <Svg>
    <Axes />
    <path d="M4 21L8 13L15 23L21 10L26 18L31 12" stroke={BLUE} strokeWidth="1.500" />
  </Svg>
);

const SparkColumnIcon = () => (
  <Svg>
    <Axes />
    <path d="M7 14H11V24H7ZM14 10H18V24H14ZM21 17H25V24H21ZM27 19H32V24H27Z" fill={BLUE} />
  </Svg>
);

const SparkWinIcon = () => (
  <Svg>
    <Axes />
    <path d="M7 8H11V15H7ZM12 8H16V15H12ZM28 8H32V15H28Z" fill="#6fa98a" />
    <path d="M17 16H21V23H17ZM22 16H26V23H22Z" fill="#dd5b3c" />
  </Svg>
);

const CHARTS: { name: string; art: React.ReactNode }[] = [
  { name: "縦棒", art: <><path d="M0 7H4V16H0Z" fill={BLUE} /><path d="M5 1H9V16H5Z" fill={SAND} /><path d="M10 5H14V16H10Z" fill={GREY} /></> },
  { name: "階層構造", art: <><path d="M0 0H7V16H0Z" fill={BLUE} /><path d="M7 0H15V9H7Z" fill={SAND} /><path d="M7 10H15V16H7Z" fill={GREY} /></> },
  { name: "ウォーターフォール", art: <><path d="M0 7H4V15H0ZM4 1H8V7H4Z" fill={BLUE} /><path d="M8 1H12V9H8Z" fill={SAND} /><path d="M12 9H16V14H12Z" fill={GREY} /></> },
  { name: "折れ線", art: <><path d="M1 15L6 1L11 15L15 3" stroke={GREY} /><path d="M1 3L5 13L10 2L15 13" stroke={BLUE} /><path d="M0 2H2V4H0ZM4 12H6V14H4ZM9 1H11V3H9ZM14 12H16V14H14Z" fill={BLUE} /></> },
  { name: "統計", art: <path d="M0 9H3V16H0ZM4 2H7V16H4ZM8 6H11V16H8ZM12 10H15V16H12Z" fill={BLUE} /> },
  { name: "組み合わせ", art: <><path d="M1 4H5V16H1Z" fill={BLUE} /><path d="M6 8H10V16H6Z" fill={SAND} /><path d="M11 10H15V16H11Z" fill={GREY} /><path d="M1 2L7 4L14 9" stroke={GREY} /></> },
  { name: "円", art: <><path d="M8 0A8 8 0 1 1 3 14L8 8Z" fill={BLUE} /><path d="M7 0V8H0A7 8 0 0 1 7 0Z" fill={SAND} /><path d="M0 9H6L3 14Q0 12 0 9Z" fill={GREY} /></> },
  { name: "散布図", art: <><path d="M1.500 1V14.500H15" stroke={GREY} /><path d="M4 5H6V7H4ZM9 4H11V6H9ZM8 10H10V12H8ZM13 9H15V11H13Z" fill={BLUE} /><path d="M4 10H6V12H4ZM12 5H14V7H12ZM11 11H13V13H11Z" fill="#d9a441" /></> },
  { name: "レーダー", art: <path d="M8 1L15 6L12.500 14H3.500L1 6ZM8 5L11.500 7.500L10 11.500H6L4.500 7.500ZM8 1V9L15 15M8 9L1 15M1 6L8 9L15 6" stroke="#999" /> },
];

const COLUMNS = "ABCDEFGHIJKLMNO".split("");
const ROWS = Array.from({ length: 27 }, (_, i) => i + 1);
const TABS = ["ホーム", "挿入", "ページ レイアウト", "数式", "データ", "校閲", "表示", "Acrobat"];

const RoadMap = () => (
  <MapCanvas>
    <svg width="473" height="356" viewBox="551 277 473 356">
      <g fill={ROAD}>
        <path d="M992 277.500L1003 298L596 509V483.500Z" />
        <path d="M552 367H1024V390H552ZM553 543H1024V565.500H553Z" />
        <path d="M578 389H596V544H578ZM692 389H710V544H692ZM954 389H972.500V544H954Z" />
        <path d="M709 496H955V506H709ZM972 458.500H1024V470H972ZM823 565H829.500V632H823Z" />
      </g>
      <path d="M770 428L828 397L905 396V491L769 489Z" fill="#e2efd9" />
      <path d="M551 316.500H1024V334H551Z" fill="#fff" stroke="#999" />
      <path d="M551 316H589V334.500H551ZM630 316H678V334.500H630ZM809 316H858V334.500H809ZM900 316H947.500V334.500H900ZM987.500 316H1024V334.500H987.500Z" fill="#262626" />
      <circle cx="605.500" cy="466.500" r="10" fill="#595959" />
      <circle cx="986.500" cy="444.500" r="10" fill="#595959" />
    </svg>
    <Station $x={126} $y={27} $w={132} $h={41} $c="#595959">東 京 駅</Station>
    <Venue $x={146} $y={292} $w={121} $h={51} $c="#002060">
      <svg width="27" height="25" viewBox="0 0 27 25">
        <path d="M13.500 0L16.600 9.500H27L18.700 15.300L21.800 25L13.500 19L5.200 25L8.300 15.300L0 9.500H10.400Z" fill="#fff" />
      </svg>
      会場
    </Venue>
    <Place $x={350} $y={91}>中央通り</Place>
    <Place $x={274} $y={164}>広場</Place>
    <Place $x={49} $y={159} $c="#222" $size={10}>コンビニ</Place>
    <Place $x={435} $y={141} $c="#222">病院</Place>
    <Place $x={97} $y={169} $turn={-27}>丸の内通り</Place>
  </MapCanvas>
);

const ShapesMenu = () => (
  <Menu>
    <MenuList>
      {MENU.map((section) => (
        <section key={section.title}>
          <MenuTitle>{section.title}</MenuTitle>
          <ShapeGrid>
            {section.shapes.split(" ").map((name) => (
              <ShapeButton key={name} type="button" aria-label={name}>
                <ShapeIcon name={name} />
              </ShapeButton>
            ))}
          </ShapeGrid>
        </section>
      ))}
    </MenuList>
    <ResizeGrip>
      <Svg w={8} h={8}>
        <path d="M5 1H7V3H5ZM5 5H7V7H5ZM1 5H3V7H1Z" fill="#999" />
      </Svg>
    </ResizeGrip>
  </Menu>
);

export default function App() {
  return (
    <Page>
      <GlobalStyle />
      <TitleBar>
        <QuickAccess>
          <QuickButton $w={24} type="button" aria-label="上書き保存">
            <Svg w={14} h={14}>
              <path d="M1 1H13V13H1ZM3 1V6.500H11V1M4 13V9.500H10V13" stroke="#fff" strokeWidth="1.500" />
              <path d="M6.500 10.500H8V13H6.500Z" fill="#fff" />
            </Svg>
          </QuickButton>
          <QuickButton $w={15} type="button" aria-label="元に戻す">
            <Svg w={15} h={14}>
              <path d="M6 1L1.500 5L6 9M2 5H9C15 5 15 12 9 12.500" stroke="#fff" strokeWidth="2.200" />
            </Svg>
          </QuickButton>
          <Caret color="#fff" />
          <QuickButton $w={17} $dim type="button" aria-label="やり直し">
            <Svg w={17} h={14}>
              <path d="M11 1L15.500 5L11 9M15 5H8C2 5 2 12 8 12.500" stroke="#fff" strokeWidth="2.200" />
            </Svg>
          </QuickButton>
          <Caret color="#4f9170" />
          <QuickButton $w={13} type="button" aria-label="タッチ">
            <Svg w={13} h={15}>
              <path d="M2 5A3.500 3.500 0 1 1 8 5" stroke="#fff" strokeWidth="1.300" />
              <path d="M4 3H6V8L12 9V12L10 15H5L1 10L2 9L4 10Z" fill="#fff" />
            </Svg>
          </QuickButton>
          <Caret color="#fff" />
          <QuickButton $w={19} type="button" aria-label="クイック アクセスのカスタマイズ">
            <Svg w={19} h={8}>
              <path d="M11 1.500H16" stroke="#fff" />
              <path d="M11 4H16L13.500 7Z" fill="#fff" />
            </Svg>
          </QuickButton>
        </QuickAccess>
        <BookTitle>Book1 - Excel</BookTitle>
      </TitleBar>

      <Tabs>
        <Tab $end type="button">ファイル</Tab>
        {TABS.map((t) => (
          <Tab key={t} type="button" $active={t === "挿入"} $long={/[ァ-ン]/.test(t)}>{t}</Tab>
        ))}
        <TellMe>
          <Svg w={11} h={15}>
            <path d="M3.500 10.500C3.500 8 1 8 1 5A4.500 4.500 0 0 1 10 5C10 8 7.500 8 7.500 10.500ZM3.500 12.500H7.500M4 14.500H7" stroke="#e8f1ec" />
          </Svg>
          <TellMeInput placeholder="実行したい作業を入力してください..." aria-label="操作アシスト" />
        </TellMe>
      </Tabs>

      <Ribbon>
        <GroupBox $w={150}>
          <Tools $cut={21}>
            <BigButton $w={48} type="button"><PivotIcon /><BigText $small><span>ピボット</span><span>テーブル</span></BigText></BigButton>
            <BigButton $w={75} type="button"><SuggestPivotIcon /><BigText $small><span>おすすめ</span><span>ピボットテーブル</span></BigText></BigButton>
            <BigButton $w={44} type="button"><TableIcon /><BigText $small>テーブル</BigText></BigButton>
          </Tools>
          <GroupLabel $shift={22}>テーブル</GroupLabel>
        </GroupBox>
        <GroupBox $w={212}>
          <Tools $pad={2}>
            <BigButton $w={44} type="button"><PictureIcon /><BigText>画像</BigText></BigButton>
            <BigButton $w={46} type="button"><OnlinePictureIcon /><BigText $small><span>オンライン</span><span>画像</span></BigText></BigButton>
            <ShapesButton type="button" aria-expanded="true">
              <ShapesIcon /><ShapesWord>図形</ShapesWord><Caret />
            </ShapesButton>
          </Tools>
        </GroupBox>
        <GroupBox $w={280}>
          <Tools $pad={7}>
            <StoreSlot>
              <SmallButton $size={11} type="button"><StoreIcon />ストア</SmallButton>
            </StoreSlot>
            <BigButton $w={67} type="button"><VisioIcon /><BigText><span>Visio Data</span><span>Visualizer</span></BigText></BigButton>
            <LinkColumn>
              <SmallButton $size={12} type="button"><BingIcon />Bing マップ</SmallButton>
              <SmallButton type="button"><PeopleIcon />People Graph</SmallButton>
            </LinkColumn>
          </Tools>
          <GroupLabel>アドイン</GroupLabel>
        </GroupBox>
        <GroupBox $w={215}>
          <Tools $pad={3}>
            <BigButton $w={46} type="button"><SuggestChartIcon /><BigText $small><span>おすすめ</span><span>グラフ</span></BigText></BigButton>
            <ChartGrid>
              {CHARTS.map((c) => (
                <ChartButton key={c.name} type="button" aria-label={c.name}>
                  <Svg w={16} h={16}>{c.art}</Svg>
                  <Caret />
                </ChartButton>
              ))}
            </ChartGrid>
            <BigButton $w={60} type="button"><PivotChartIcon /><BigText $small><span>ピボットグラフ</span><CaretLine><Caret /></CaretLine></BigText></BigButton>
          </Tools>
          <GroupLabel $shift={16}>グラフ</GroupLabel>
          <Launcher type="button" aria-label="グラフの詳細">
            <Svg w={7} h={7}>
              <path d="M0.500 5V0.500H5M3 3L6 6M6.500 3V6.500H3" stroke="#777" />
            </Svg>
          </Launcher>
        </GroupBox>
        <GroupBox $w={49}>
          <Tools>
            <BigButton $w={48} type="button"><Map3DIcon /><BigText><span>3D マッ</span><CaretLine>プ<Caret /></CaretLine></BigText></BigButton>
          </Tools>
          <GroupLabel>ツアー</GroupLabel>
        </GroupBox>
        <GroupBox $w={130}>
          <Tools $pad={3}>
            <BigButton $w={42} type="button"><SparkLineIcon /><BigText>折れ線</BigText></BigButton>
            <BigButton $w={41} type="button"><SparkColumnIcon /><BigText>縦棒</BigText></BigButton>
            <BigButton $w={43} type="button"><SparkWinIcon /><BigText>勝敗</BigText></BigButton>
          </Tools>
          <GroupLabel>スパークライン</GroupLabel>
        </GroupBox>
      </Ribbon>

      <FormulaBar>
        <NameBox>
          <NameInput defaultValue="22" aria-label="名前ボックス" />
          <Caret />
        </NameBox>
        <Grip>
          <Svg w={3} h={13}>
            <path d="M0.500 1H2.500V3H0.500ZM0.500 5.500H2.500V7.500H0.500ZM0.500 10H2.500V12H0.500Z" fill="#aaa" />
          </Svg>
        </Grip>
        <FormulaTools>
          <button type="button" aria-label="キャンセル">
            <Svg w={14} h={13}><path d="M2 1L12 12M12 1L2 12" stroke="#bbb" strokeWidth="2" /></Svg>
          </button>
          <button type="button" aria-label="入力">
            <Svg w={14} h={13}><path d="M1 7L5 11L13 2" stroke="#bbb" strokeWidth="2.500" /></Svg>
          </button>
          <FxButton type="button">fx</FxButton>
        </FormulaTools>
        <FormulaInput aria-label="数式バー" />
      </FormulaBar>

      <SheetArea>
        <Sheet>
          <thead>
            <tr>
              <Corner aria-label="すべて選択">
                <Svg w={11} h={11}><path d="M11 0V11H0Z" fill="#b5b5b5" /></Svg>
              </Corner>
              {COLUMNS.map((c) => <ColHead key={c} scope="col">{c}</ColHead>)}
            </tr>
          </thead>
          <tbody>
            {ROWS.map((r) => (
              <tr key={r}>
                <RowHead scope="row" $active={r === 22}>{r}</RowHead>
                {COLUMNS.map((c) => <Cell key={c} />)}
              </tr>
            ))}
          </tbody>
        </Sheet>
      </SheetArea>

      <RoadMap />
      <ShapesMenu />

      <Caption>よく使用する図形</Caption>
      <Frame $x={239} $y={158} $w={51} />
      <Frame $x={239} $y={199} $w={32} />
      <Frame $x={239} $y={240} $w={51} />
      <Frame $x={439} $y={158} $w={33} />
      <Frame $x={238} $y={485} $w={32} />
      <Pointers width="680" height="560" viewBox="0 0 680 560" stroke={RED} strokeWidth="2.500">
        <path d="M165 145L240 173M197 223L240 213M198 268L240 254M471 185L567 253M198 495L240 500" />
      </Pointers>
      <Note $x={65} $y={134}>直線・矢印</Note>
      <Note $x={123} $y={213}>四角形</Note>
      <Note $x={47} $y={258}>テキストボックス</Note>
      <Note $x={537} $y={257}>フリーフォーム</Note>
      <Note $x={127} $y={483}>楕円形</Note>
    </Page>
  );
}
